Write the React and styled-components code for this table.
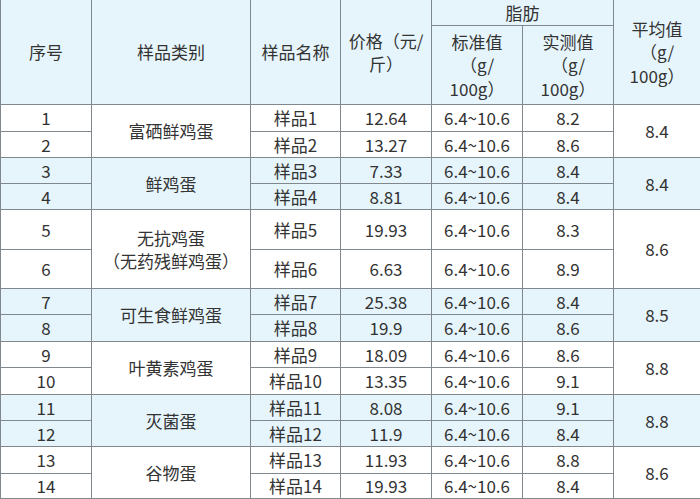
import React from 'react'
import styled, { createGlobalStyle } from 'styled-components'

const GlobalStyle = createGlobalStyle`
  html, body {
    margin: 0;
    padding: 0;
    background: #ffffff;
  }
  body {
    font-family: "Noto Sans CJK SC", "Noto Sans", sans-serif;
    color: #333333;
  }
`

const Table = styled.div`
  display: grid;
  width: 700px;
  box-sizing: border-box;
  grid-template-columns: 90px 158px 89px 90px 90px 90px 86px;
  grid-template-rows: 25px 78px 26px 25px 25px 25px 39px 38px 25px 26px 25px 26px 25px 25px 26px 24px;
  gap: 1px;
  padding: 0 0 1px 1px;
  background: #80888e;
`

const Cell = styled.div`
  display: flex;
  align-items: center;
  justify-content: center;
  text-align: center;
  font-size: 17px;
  line-height: 23.5px;
  background: ${p => (p.$tint ? '#e6f5fc' : '#ffffff')};
  grid-row: ${p => (p.$rows ? `span ${p.$rows}` : 'auto')};
  grid-column: ${p => (p.$cols ? `span ${p.$cols}` : 'auto')};
  white-space: nowrap;
`

const HeadCell = styled(Cell)`
  background: #e6f5fc;
`

const groups = [
  { name: '富硒鲜鸡蛋', avg: '8.4', rows: [['1', '样品1', '12.64', '8.2'], ['2', '样品2', '13.27', '8.6']] },
  { name: '鲜鸡蛋', avg: '8.4', rows: [['3', '样品3', '7.33', '8.4'], ['4', '样品4', '8.81', '8.4']] },
  { name: ['无抗鸡蛋', '（无药残鲜鸡蛋）'], avg: '8.6', rows: [['5', '样品5', '19.93', '8.3'], ['6', '样品6', '6.63', '8.9']] },
  { name: '可生食鲜鸡蛋', avg: '8.5', rows: [['7', '样品7', '25.38', '8.4'], ['8', '样品8', '19.9', '8.6']] },
  { name: '叶黄素鸡蛋', avg: '8.8', rows: [['9', '样品9', '18.09', '8.6'], ['10', '样品10', '13.35', '9.1']] },
  { name: '灭菌蛋', avg: '8.8', rows: [['11', '样品11', '8.08', '9.1'], ['12', '样品12', '11.9', '8.4']] },
  { name: '谷物蛋', avg: '8.6', rows: [['13', '样品13', '11.93', '8.8'], ['14', '样品14', '19.93', '8.4']] },
]

const Lines = ({ parts }) =>
  parts.map((t, i) => (
    <React.Fragment key={i}>
      {i > 0 && <br />}
      {t}
    </React.Fragment>
  ))

export default function App() {
  return (
    <>
      <GlobalStyle />
      <Table>
        <HeadCell $rows={2}>序号</HeadCell>
        <HeadCell $rows={2}>样品类别</HeadCell>
        <HeadCell $rows={2}>样品名称</HeadCell>
        <HeadCell $rows={2}>
          <span><Lines parts={['价格（元/', '斤）']} /></span>
        </HeadCell>
        <HeadCell $cols={2}>脂肪</HeadCell>
        <HeadCell $rows={2}>
          <span><Lines parts={['平均值', '（g/', '100g）']} /></span>
        </HeadCell>
        <HeadCell>
          <span><Lines parts={['标准值', '（g/', '100g）']} /></span>
        </HeadCell>
        <HeadCell>
          <span><Lines parts={['实测值', '（g/', '100g）']} /></span>
        </HeadCell>

        {groups.map((g, gi) => {
          const tint = gi % 2 === 1
          const [a, b] = g.rows
          return (
            <React.Fragment key={gi}>
              <Cell $tint={tint}>{a[0]}</Cell>
              <Cell $tint={tint} $rows={2}>
                <span>{Array.isArray(g.name) ? <Lines parts={g.name} /> : g.name}</span>
              </Cell>
              <Cell $tint={tint}>{a[1]}</Cell>
              <Cell $tint={tint}>{a[2]}</Cell>
              <Cell $tint={tint}>6.4~10.6</Cell>
              <Cell $tint={tint}>{a[3]}</Cell>
              <Cell $tint={tint} $rows={2}>{g.avg}</Cell>
              <Cell $tint={tint}>{b[0]}</Cell>
              <Cell $tint={tint}>{b[1]}</Cell>
              <Cell $tint={tint}>{b[2]}</Cell>
              <Cell $tint={tint}>6.4~10.6</Cell>
              <Cell $tint={tint}>{b[3]}</Cell>
            </React.Fragment>
          )
        })}
      </Table>
    </>
  )
}
